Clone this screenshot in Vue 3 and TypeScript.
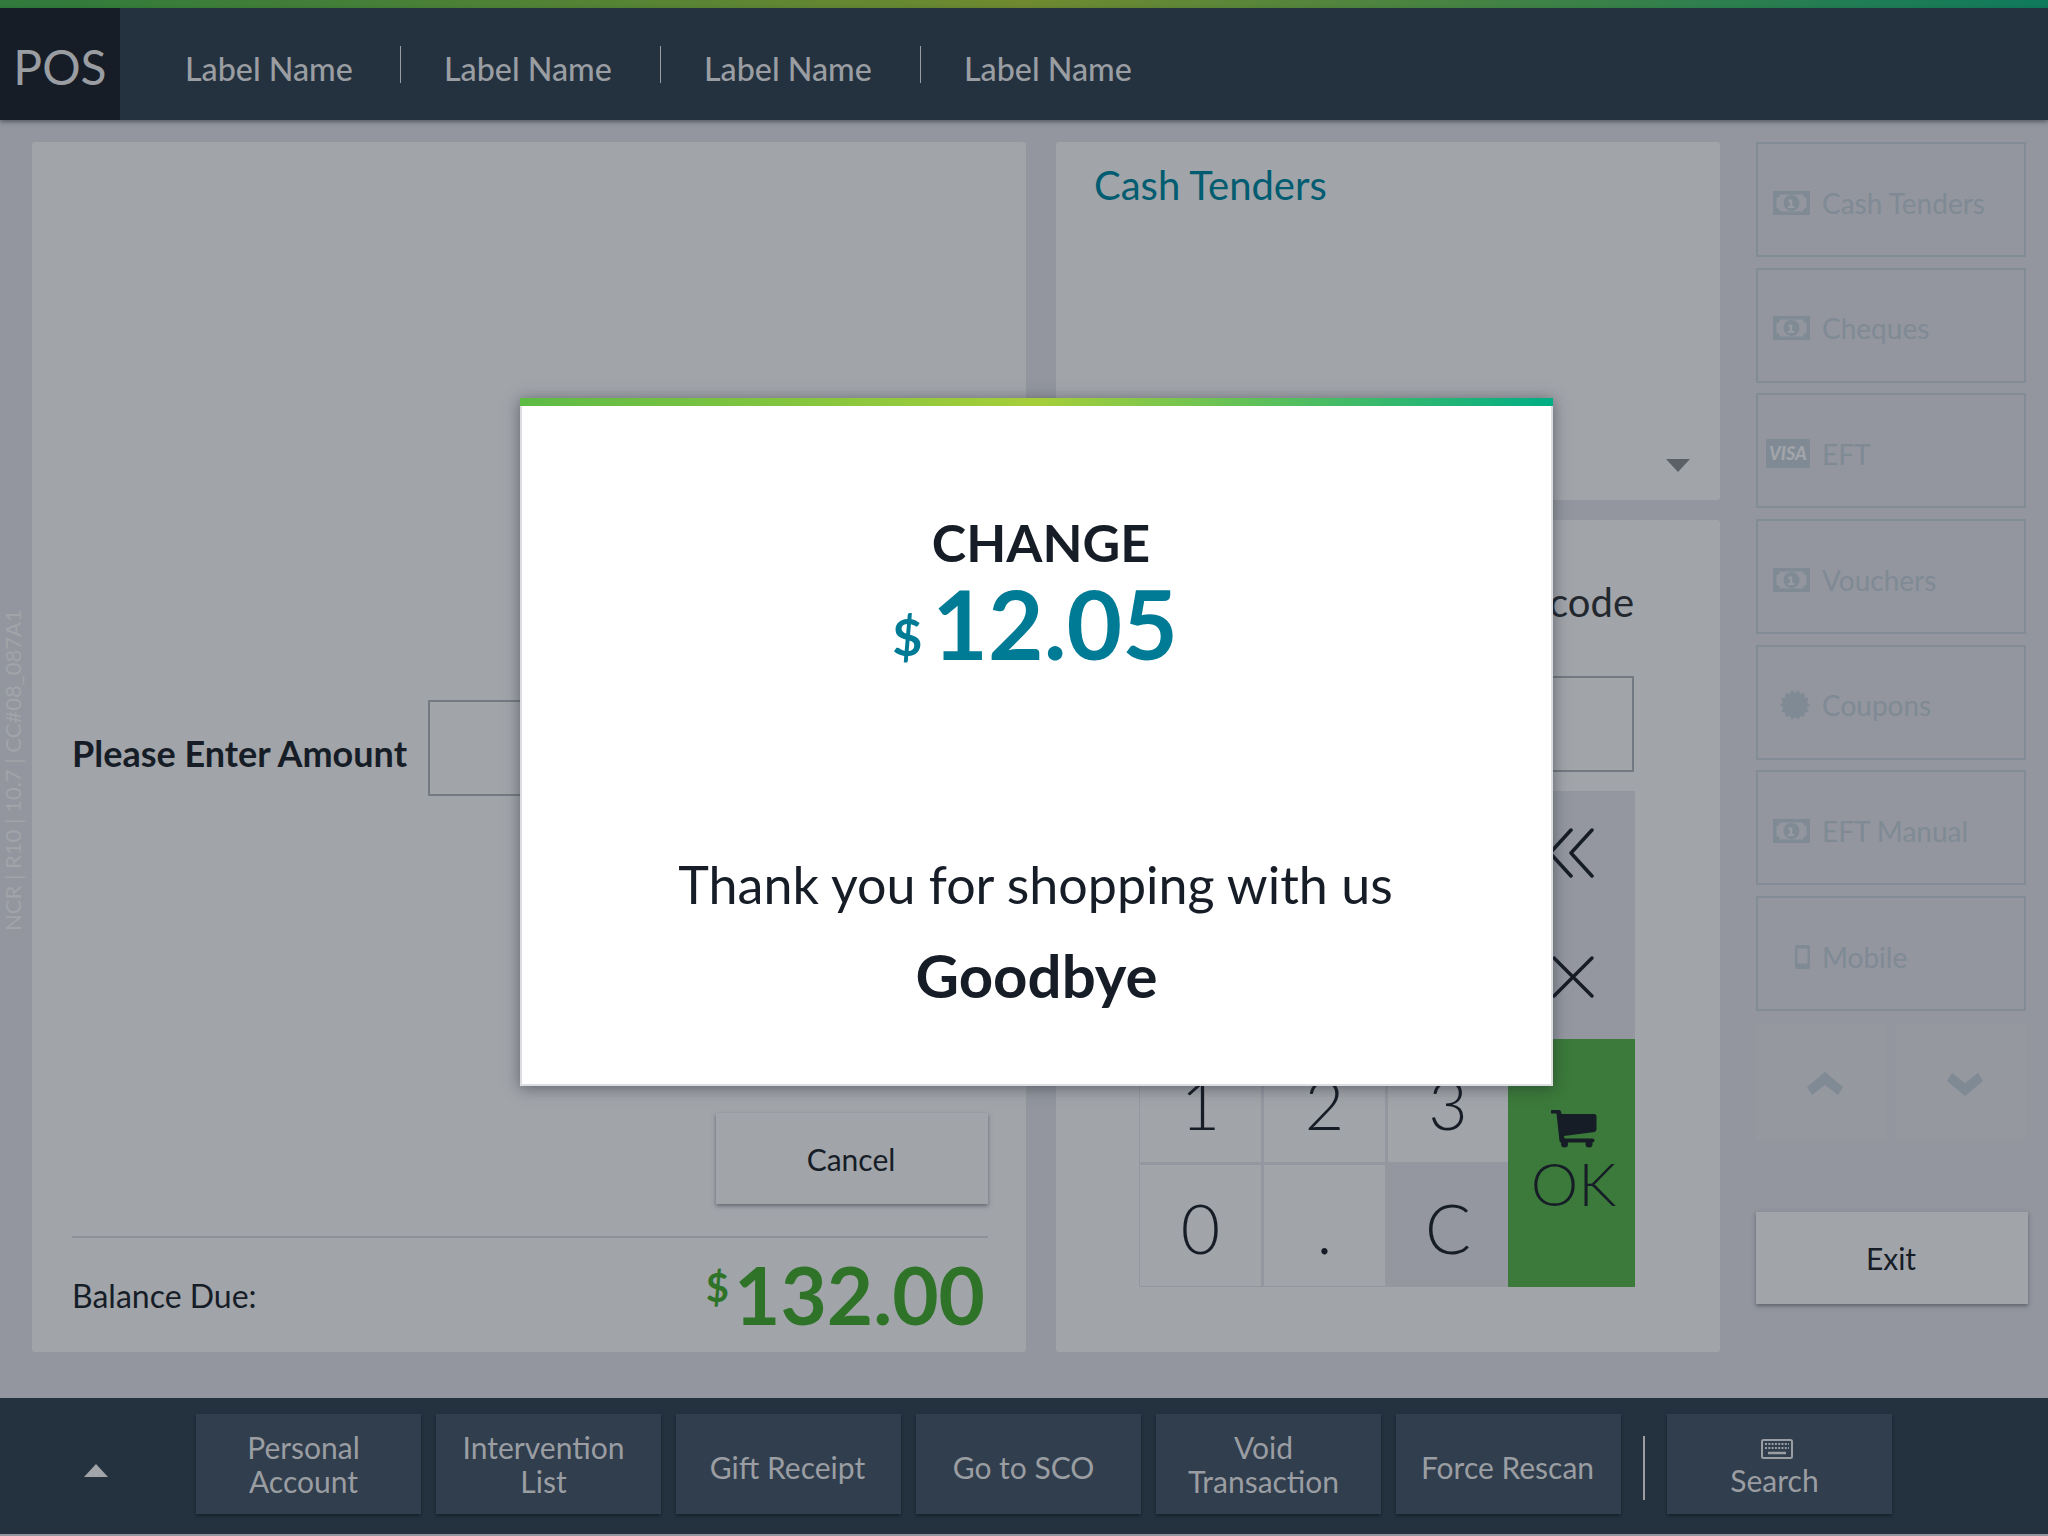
<template>
  <div class="pos">
    <div class="top-stripe"></div>
    <header class="header">
      <div class="brand">POS</div>
      <nav class="labels">
        <span v-for="n in 4" :key="n" class="label">Label Name</span>
      </nav>
    </header>

    <main class="main">
      <div class="build-tag">NCR | R10 | 10.7 | CC#08_087A1</div>

      <section class="panel left">
        <div class="entry">
          <span class="entry-label">Please Enter Amount</span>
          <div class="field entry-field"></div>
        </div>
        <button class="raised cancel">Cancel</button>
        <div class="balance">
          <span class="balance-label">Balance Due:</span>
          <span class="balance-amount"><sup>$</sup>132.00</span>
        </div>
      </section>

      <div class="middle">
        <section class="panel tenders">
          <h2 class="tenders-title">Cash Tenders</h2>
          <span class="caret"></span>
        </section>
        <section class="panel barcode">
          <div class="barcode-label">Enter Barcode</div>
          <div class="field barcode-field"></div>
          <div class="keypad">
            <button v-for="(k, i) in digits" :key="i" class="key" :class="{ dark: k === 'C' }" :style="keyPos(i)">{{ k }}</button>
            <button class="key dark back">
              <svg width="46" height="50" viewBox="0 0 46 50"><path d="M23 2 2 25l21 23M44 2 23 25l21 23" fill="none" stroke="#161d27" stroke-width="3.5" stroke-linecap="round" stroke-linejoin="round" /></svg>
            </button>
            <button class="key dark clear">
              <svg width="44" height="44" viewBox="0 0 44 44"><path d="M3 3l38 38M41 3 3 41" fill="none" stroke="#161d27" stroke-width="3.5" stroke-linecap="round" /></svg>
            </button>
            <button class="key ok">
              <svg width="46" height="38" viewBox="0 0 46 38"><path d="M1 0h7a2 2 0 0 1 2 1.6L10.500 4H43a2.500 2.500 0 0 1 2.500 2.500v13a2.500 2.500 0 0 1-2 2.400L13 26l.5 2.500h28a1.500 1.500 0 0 1 0 4h-31a2 2 0 0 1-2-1.600L5.500 3.500H1a1.700 1.700 0 0 1 0-3.500z" fill="#161d27" /><circle cx="13.500" cy="34" r="3.500" fill="#161d27" /><circle cx="38" cy="34" r="3.500" fill="#161d27" /></svg>
              <span>OK</span>
            </button>
          </div>
        </section>
      </div>

      <aside class="side">
        <button v-for="t in tenders" :key="t.name" class="tender">
          <span class="tender-icon">
            <svg v-if="t.icon === 'cash'" width="37" height="24" viewBox="0 0 37 24">
              <path fill-rule="evenodd" d="M0 0h37v24H0zM7 3.500a4 4 0 0 1-3.500 3.500v10A4 4 0 0 1 7 20.500h23a4 4 0 0 1 3.500-3.500V7A4 4 0 0 1 30 3.500z" fill="#7f8a95" />
              <circle cx="18.500" cy="12" r="8" fill="#7f8a95" />
              <path d="M15.500 8.500h3.800v6.500h2v2h-6.500v-2h2v-4h-1.300z" fill="#969aa2" />
            </svg>
            <svg v-else-if="t.icon === 'visa'" width="44" height="29" viewBox="0 0 44 29">
              <rect width="44" height="29" rx="2" fill="#7f8a95" />
              <text x="22" y="21" text-anchor="middle" class="visa-text">VISA</text>
            </svg>
            <svg v-else-if="t.icon === 'coupon'" width="30" height="30" viewBox="0 0 30 30">
              <polygon :points="burst" fill="#7f8a95" stroke="#7f8a95" stroke-width="1" stroke-linejoin="round" />
            </svg>
            <svg v-else width="15" height="24" viewBox="0 0 15 24">
              <path fill-rule="evenodd" d="M2 0h11a2 2 0 0 1 2 2v20a2 2 0 0 1-2 2H2a2 2 0 0 1-2-2V2a2 2 0 0 1 2-2zm.5 3.500v15h10v-15z" fill="#7f8a95" />
            </svg>
          </span>
          <span>{{ t.name }}</span>
        </button>
        <div class="arrows">
          <button class="arrow">
            <svg width="36" height="24" viewBox="0 0 36 24"><path d="M18 0 36 15l-5 8-13-10L5 23l-5-8z" fill="#7f8a95" /></svg>
          </button>
          <button class="arrow">
            <svg width="36" height="24" viewBox="0 0 36 24"><path d="M18 24 36 9l-5-8-13 10L5 1 0 9z" fill="#7f8a95" /></svg>
          </button>
        </div>
        <button class="raised exit">Exit</button>
      </aside>
    </main>

    <footer class="footer">
      <button class="toggle"><span class="toggle-tri"></span></button>
      <button v-for="a in actions" :key="a.label" class="action" :class="a.kind">{{ a.label }}</button>
      <span class="divider"></span>
      <button class="action search">
        <svg class="kbd" width="32" height="20" viewBox="0 0 32 20">
          <rect x="1" y="1" width="30" height="18" rx="1.500" fill="none" stroke="#9a9da1" stroke-width="2" />
          <path d="M4 5h24M4 9h24" stroke="#9a9da1" stroke-width="2" stroke-dasharray="2 1.300" />
          <path d="M7 14h18" stroke="#9a9da1" stroke-width="2.500" />
        </svg>
        <span>Search</span>
      </button>
    </footer>

    <div class="modal">
      <div class="modal-stripe"></div>
      <div class="change">CHANGE</div>
      <div class="change-amount"><span class="change-cur">$</span>12.05</div>
      <div class="thanks">Thank you for shopping with us</div>
      <div class="goodbye">Goodbye</div>
    </div>
  </div>
</template>

<script setup lang="ts">
interface Tender {
  name: string;
  icon: 'cash' | 'visa' | 'coupon' | 'mobile';
}

const tenders: Tender[] = [
  { name: 'Cash Tenders', icon: 'cash' },
  { name: 'Cheques', icon: 'cash' },
  { name: 'EFT', icon: 'visa' },
  { name: 'Vouchers', icon: 'cash' },
  { name: 'Coupons', icon: 'coupon' },
  { name: 'EFT Manual', icon: 'cash' },
  { name: 'Mobile', icon: 'mobile' },
];

const actions = [
  { label: 'Personal Account', kind: '' },
  { label: 'Intervention List', kind: '' },
  { label: 'Gift Receipt', kind: 'single wide' },
  { label: 'Go to SCO', kind: 'single' },
  { label: 'Void Transaction', kind: '' },
  { label: 'Force Rescan', kind: 'single wide' },
];

// the upper rows sit behind the modal, so they carry no label here
const digits = ['', '', '', '', '', '', '1', '2', '3', '0', '.', 'C'];

const keyPos = (i: number) => ({ gridColumn: (i % 3) + 1, gridRow: Math.floor(i / 3) + 1 });

// coupon badge outline, alternating outer and inner radius
const burst = Array.from({ length: 28 }, (_, i) => {
  const r = i % 2 ? 11.5 : 14.5;
  const a = (i * Math.PI) / 14;
  return `${(15 + r * Math.cos(a)).toFixed(2)},${(15 + r * Math.sin(a)).toFixed(2)}`;
}).join(' ');
</script>

<style>
html, body {
  margin: 0;
  background: #93969e;
}
</style>

<style scoped>
.pos {
  position: relative;
  width: 2048px;
  height: 1536px;
  display: flex;
  flex-direction: column;
  overflow: hidden;
  background: #93969e;
  color: #161d27;
  font-family: Lato, "Liberation Sans", sans-serif;
}

button {
  font-family: inherit;
  color: inherit;
  border: none;
  padding: 0;
}

.top-stripe {
  height: 8px;
  background: linear-gradient(90deg, #2f7a3c 0%, #6f8a30 50%, #0f7a5c 100%);
}

.header {
  height: 112px;
  display: flex;
  background: #243240;
  box-shadow: 0 2px 4px rgba(30, 35, 45, 0.5);
  position: relative;
}

.brand {
  width: 120px;
  background: #161d27;
  color: #9a9da1;
  font-size: 48px;
  font-weight: 400;
  padding-top: 4px;
  box-sizing: border-box;
  display: flex;
  align-items: center;
  justify-content: center;
}

.labels {
  display: flex;
  align-items: center;
  padding-left: 65px;
}

.label {
  color: #9a9da1;
  font-size: 32.250px;
  font-weight: 500;
  width: 215px;
  height: 37px;
  display: flex;
  align-items: center;
  padding-top: 8px;
  box-sizing: border-box;
  white-space: nowrap;
}

.label + .label {
  border-left: 1px solid #9a9da1;
  padding-left: 43px;
  width: 260px;
}

.main {
  flex: 1;
  position: relative;
  display: flex;
  padding: 22px 20px 46px 32px;
  min-height: 0;
}

.build-tag {
  position: absolute;
  left: -1px;
  top: 493px;
  height: 318px;
  writing-mode: vertical-rl;
  transform: rotate(180deg);
  font-size: 22px;
  white-space: nowrap;
  color: #a1a4a9;
  text-align: left;
}

.panel {
  background: #a1a4a9;
  border-radius: 3px;
}

.left {
  width: 994px;
  box-sizing: border-box;
  padding: 558px 38px 0 40px;
  display: flex;
  flex-direction: column;
}

.entry {
  display: flex;
  align-items: center;
  height: 96px;
}

.entry-label {
  font-size: 36px;
  font-weight: 700;
  width: 356px;
  padding-top: 10px;
  white-space: nowrap;
}

.field {
  border: 2px solid #727983;
  box-sizing: border-box;
}

.entry-field {
  width: 500px;
  height: 96px;
}

.raised {
  background: #a1a4a9;
  box-shadow: 0 2px 4px rgba(50, 55, 65, 0.55);
  font-size: 30px;
  padding-right: 2px;
}

.cancel {
  align-self: flex-end;
  width: 272px;
  height: 91px;
  margin-top: 317px;
}

.balance {
  margin-top: 32px;
  border-top: 2px solid #8e9198;
  display: flex;
  justify-content: space-between;
  align-items: flex-end;
  height: 92px;
}

.balance-label {
  font-size: 32px;
  line-height: 38px;
  margin-bottom: 15px;
}

.balance-amount {
  color: #2e7327;
  font-size: 80px;
  font-weight: 700;
  line-height: 80px;
  margin-right: 3px;
  margin-bottom: -4px;
}

.balance-amount sup {
  font-size: 40px;
  line-height: 1;
  vertical-align: 23px;
  margin-right: 5px;
}

.middle {
  width: 664px;
  margin-left: 30px;
  display: flex;
  flex-direction: column;
  gap: 20px;
}

.tenders {
  height: 358px;
  position: relative;
  box-sizing: border-box;
  padding: 19px 38px;
}

.tenders-title {
  margin: 0;
  font-size: 40px;
  font-weight: 400;
  line-height: 48px;
  color: #005c70;
}

.caret {
  position: absolute;
  left: 610px;
  top: 317px;
  border-left: 12px solid transparent;
  border-right: 12px solid transparent;
  border-top: 13px solid #5b5f66;
}

.barcode {
  flex: 1;
  box-sizing: border-box;
  padding: 0 86px 0 83px;
}

.barcode-label {
  font-size: 40px;
  line-height: 48px;
  margin-top: 58px;
  text-align: right;
  color: #23282f;
}

.barcode-field {
  height: 96px;
  margin-top: 50px;
}

.keypad {
  display: grid;
  grid-template-columns: 121px 121px 120px 1fr;
  grid-template-rows: repeat(4, 1fr);
  gap: 3px;
  width: 496px;
  height: 496px;
  margin-top: 19px;
  box-sizing: border-box;
  padding: 1px;
  background: #94979f;
}

.key {
  background: #a1a4a9;
  font-size: 68px;
  font-weight: 300;
  padding-top: 5px;
  box-sizing: border-box;
  display: flex;
  align-items: center;
  justify-content: center;
}

.key.dark {
  background: #94979f;
}

.back {
  grid-column: 4;
  grid-row: 1;
  padding-top: 0;
  padding-right: 4px;
}

.clear {
  grid-column: 4;
  grid-row: 2;
  padding-top: 0;
}

.ok {
  grid-column: 4;
  grid-row: 3 / 5;
  background: #3b7a3a;
  flex-direction: column;
  font-size: 60px;
  line-height: 64px;
  padding: 7px 0 8px 4px;
  margin: -2px -1px -1px -3px;
}

.ok svg {
  margin-bottom: 3px;
}

.side {
  width: 272px;
  margin-left: 36px;
  display: flex;
  flex-direction: column;
}

.tender {
  width: 270px;
  height: 115px;
  box-sizing: border-box;
  margin-bottom: 10.700px;
  background: transparent;
  border: 2px solid #828c96;
  color: #7f8a95;
  font-size: 28px;
  display: flex;
  align-items: center;
  padding: 6px 0 0 0;
  gap: 12px;
}

.tender-icon {
  width: 52px;
  display: flex;
  justify-content: flex-end;
}

.arrows {
  display: flex;
  gap: 10px;
  width: 270px;
  height: 115px;
  margin-top: 2px;
}

.arrow {
  flex: 1;
  background: #95989f;
  display: flex;
  align-items: center;
  justify-content: center;
  padding: 6px 0 0 8px;
}

.visa-text {
  font-family: Lato, "Liberation Sans", sans-serif;
  font-size: 18px;
  font-weight: 900;
  font-style: italic;
  fill: #a1a4a9;
}

.exit {
  width: 272px;
  height: 92px;
  margin-top: 73px;
}

.footer {
  height: 136px;
  margin-bottom: 2px;
  flex: none;
  background: #243240;
  display: flex;
  align-items: flex-start;
  padding-top: 16px;
  box-sizing: border-box;
  gap: 15px;
}

.toggle {
  width: 181px;
  height: 100px;
  background: transparent;
  display: flex;
  align-items: center;
  justify-content: center;
  padding: 12px 0 0 10px;
}

.toggle-tri {
  border-left: 12px solid transparent;
  border-right: 12px solid transparent;
  border-bottom: 13px solid #a1a4a9;
}

.action {
  width: 225px;
  height: 100px;
  background: #313e4e;
  color: #9a9da1;
  font-size: 30px;
  line-height: 34px;
  font-weight: 400;
  box-shadow: 0 2px 3px #16202a;
  padding: 0 29px 0 19px;
  box-sizing: border-box;
  display: flex;
  flex-direction: column;
  align-items: center;
  justify-content: center;
}

.action.single {
  padding-top: 5px;
}

.action.wide {
  padding-left: 0;
  padding-right: 2px;
}

.action.search {
  padding-top: 8px;
}

.kbd {
  margin: 0 0 4px 4px;
}

.divider {
  width: 2px;
  height: 64px;
  margin: 22px 7px 0 7px;
  background: #9a9da1;
}

.modal {
  position: absolute;
  left: 520px;
  top: 398px;
  width: 1033px;
  height: 688px;
  box-sizing: border-box;
  background: #fff;
  border: 2px solid #dcdde0;
  border-top: none;
  box-shadow: 0 2px 14px rgba(30, 35, 45, 0.5);
  text-align: center;
  display: flex;
  flex-direction: column;
}

.modal-stripe {
  height: 8px;
  margin: 0 -2px;
  background: linear-gradient(90deg, #5dbb46 0%, #a6ce39 50%, #00ae85 100%);
}

.change {
  font-size: 52px;
  font-weight: 700;
  line-height: 60px;
  margin-top: 106px;
  padding-left: 9px;
}

.change-amount {
  color: #007b96;
  font-size: 96px;
  font-weight: 700;
  line-height: 100px;
  margin-top: 1px;
  padding-right: 3px;
}

.change-cur {
  font-size: 52px;
  margin-right: 10px;
  vertical-align: 4px;
}

.thanks {
  font-size: 52px;
  line-height: 64px;
  margin-top: 166px;
  padding-right: 2px;
}

.goodbye {
  font-size: 60px;
  font-weight: 700;
  line-height: 72px;
  margin-top: 23px;
}
</style>
